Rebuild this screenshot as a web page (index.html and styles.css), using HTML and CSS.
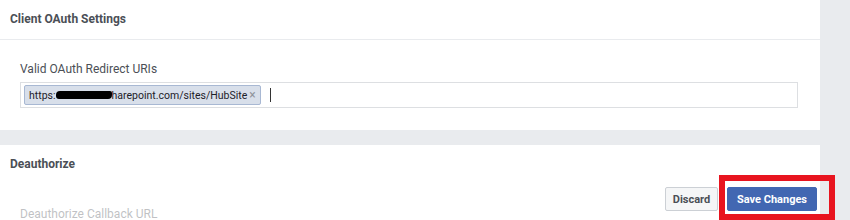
FILE: index.html
```html
<!DOCTYPE html>
<html lang="en">
<head>
  <meta charset="UTF-8" />
  <title>Client OAuth Settings</title>
  <link rel="stylesheet" href="styles.css">
</head>
<body>
  <main class="page">
    <section class="card">
      <h2 class="card-title">Client OAuth Settings</h2>
      <div class="card-body">
        <label class="field-label">Valid OAuth Redirect URIs</label>
        <div class="token-input">
          <span class="token">https:<span class="redacted"></span>harepoint.com/sites/HubSite <span class="token-x">×</span></span>
          <span class="caret"></span>
        </div>
      </div>
    </section>

    <section class="card card-last">
      <h2 class="card-title">Deauthorize</h2>
      <div class="card-body">
        <label class="field-label">Deauthorize Callback URL</label>
      </div>
    </section>

    <div class="save-bar">
      <button class="btn btn-discard">Discard</button>
      <button class="btn btn-save">Save Changes</button>
    </div>
    <div class="highlight"></div>
  </main>
</body>
</html>
```

FILE: styles.css
```css
html, body {
  overflow: hidden;
}

body {
  margin: 0;
  background: #e9ebee;
  font-family: Roboto, "Liberation Sans", Arial, sans-serif;
  color: #4b4f56;
}

.page {
  position: relative;
  width: 820px;
  height: 220px;
}

.card {
  background: #fff;
  margin-bottom: 15px;
}

.card-last {
  margin-bottom: 0;
}

.card-title {
  margin: 0;
  height: 39px;
  line-height: 39px;
  padding-left: 10px;
  font-size: 12px;
  font-weight: 700;
  color: #4b4f56;
  border-bottom: 1px solid #e9ebee;
}

.card-last .card-title {
  border-bottom-color: #fff;
}

.card-body {
  padding: 21px 22px 22px 20px;
}

.field-label {
  display: block;
  font-size: 12px;
  line-height: 16px;
  margin-bottom: 5px;
}

.token-input {
  height: 24px;
  border: 1px solid #dddfe2;
  display: flex;
  align-items: center;
  padding-left: 3px;
}

.token {
  display: inline-flex;
  align-items: center;
  height: 18px;
  padding: 0 4px 0 4px;
  background: #d8dfea;
  border: 1px solid #a8b8d3;
  border-radius: 2px;
  font-size: 10.5px;
  color: #1d2129;
}

.redacted {
  display: inline-block;
  width: 56px;
  height: 8px;
  background: #000;
  border-radius: 4px 2px 4px 3px;
}

.token-x {
  color: #90949c;
  margin-left: 2px;
  font-size: 12px;
}

.caret {
  width: 1px;
  height: 14px;
  background: #333;
  margin-left: 9px;
}

.save-bar {
  position: absolute;
  top: 175px;
  left: 0;
  width: 817px;
  height: 45px;
  padding-top: 12px;
  box-sizing: border-box;
  background: rgba(255, 255, 255, 0.65);
  display: flex;
  justify-content: flex-end;
  align-items: flex-start;
  gap: 9px;
}

.btn {
  height: 24px;
  padding: 0;
  font-family: inherit;
  font-size: 11px;
  font-weight: 700;
  white-space: nowrap;
  border-radius: 2px;
  border: 1px solid;
}

.btn-discard {
  width: 53px;
  background: #f5f6f7;
  border-color: #ccd0d5;
  color: #4b4f56;
}

.btn-save {
  width: 90px;
  background: #4267b2;
  border-color: #4267b2;
  color: #fff;
}

.highlight {
  position: absolute;
  top: 175px;
  left: 719px;
  width: 104px;
  height: 33px;
  border: 6px solid #e8141f;
}
```
